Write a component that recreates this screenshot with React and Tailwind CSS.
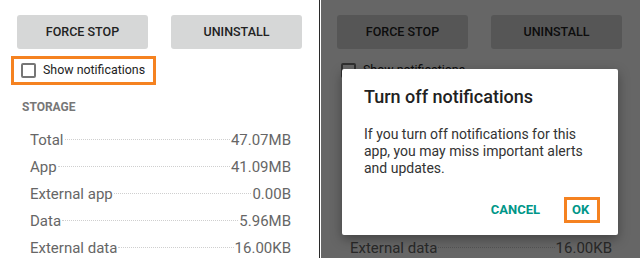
import React from 'react';

const rows = [
  { label: 'Total', value: '47.07MB' },
  { label: 'App', value: '41.09MB' },
  { label: 'External app', value: '0.00B' },
  { label: 'Data', value: '5.96MB' },
  { label: 'External data', value: '16.00KB' },
];

function AppInfo({ highlight }) {
  return (
    <div className="flex flex-col bg-white h-full">
      <div className="flex gap-[23px] pl-[17px] pt-[15px]">
        <button className="w-[131px] h-[34px] rounded-[3px] bg-[#d6d7d7] text-[12.5px] font-medium text-[#222]">
          FORCE STOP
        </button>
        <button className="w-[131px] h-[34px] rounded-[3px] bg-[#d6d7d7] text-[12.5px] font-medium text-[#222]">
          UNINSTALL
        </button>
      </div>

      <div className="pl-[11px] mt-[7px]">
        <div
          className={`inline-flex items-center w-[145px] h-[29px] border-[3px] ${
            highlight ? 'border-[#f58220]' : 'border-transparent'
          }`}
        >
          <span className="ml-[7px] w-[15px] h-[15px] border-2 border-[#767676] rounded-[2px]" />
          <span className="ml-[7px] text-[12.4px] text-[#222] leading-none whitespace-nowrap">Show notifications</span>
        </div>
      </div>

      <div className="pl-[22px] mt-[16px] text-[12px] font-bold text-[#777] leading-none">STORAGE</div>
      <div className="ml-[14px] w-[291px] mt-[6px] h-px bg-[#e2e2e2]" />

      <div className="flex flex-col pl-[30px] pr-[28px] mt-[8px]">
        {rows.map(r => (
          <div key={r.label} className="flex items-baseline h-[27px] text-[15px] text-[#666] leading-[27px]">
            <span>{r.label}</span>
            <span className="flex-1 mx-[1px] border-b border-dotted border-[#cfcfcf] translate-y-[-5px]" />
            <span>{r.value}</span>
          </div>
        ))}
      </div>
    </div>
  );
}

export default function App() {
  return (
    <div
      className="flex w-[640px] h-[258px] overflow-hidden bg-[#333]"
      style={{ fontFamily: 'Roboto, "Noto Sans", sans-serif' }}
    >
      <div className="w-[319px] h-full">
        <AppInfo highlight />
      </div>
      <div className="w-[2px] h-full bg-[#2a2a2a]" />
      <div className="relative w-[319px] h-full">
        <div className="-ml-px w-[320px] h-full">
          <AppInfo />
        </div>
        <div className="absolute inset-0 bg-black/60" />
        <div className="absolute left-[21px] top-[69px] w-[276px] h-[166px] bg-white rounded-[2px] shadow-[0_4px_12px_rgba(0,0,0,0.35)]">
          <div className="pl-[22px] pt-[19px] text-[18px] font-medium text-[#212121] leading-none">
            Turn off notifications
          </div>
          <div className="pl-[22px] pr-[16px] mt-[20px] text-[14px] text-[#333] leading-[17px]">
            If you turn off notifications for this app, you may miss important alerts and updates.
          </div>
          <div className="flex justify-end items-center mt-[20px] pr-[18px] gap-[24px]">
            <span className="text-[13px] font-bold text-[#009688]">CANCEL</span>
            <span className="flex items-center w-[36px] h-[26px] border-[3px] border-[#f58220] pl-[5px] text-[13px] font-bold text-[#009688]">
              OK
            </span>
          </div>
        </div>
      </div>
    </div>
  );
}
